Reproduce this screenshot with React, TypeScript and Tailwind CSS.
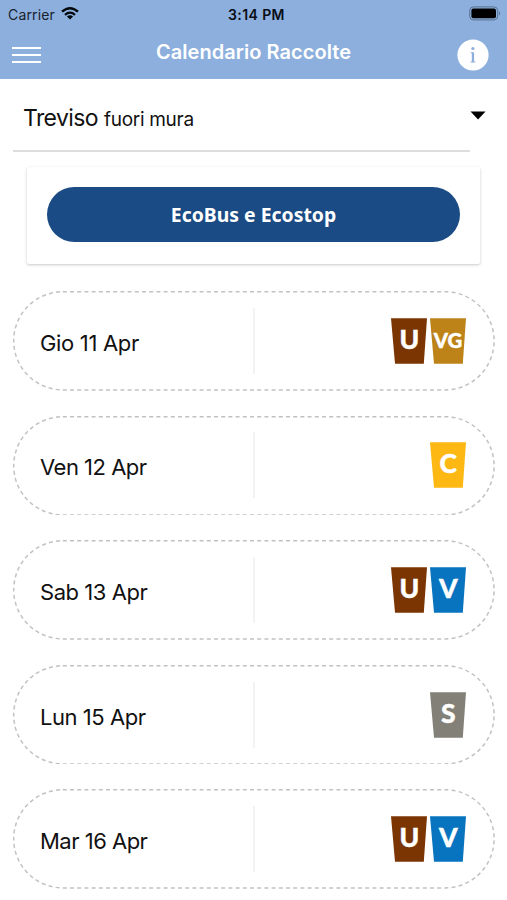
type Bin = "U" | "VG" | "C" | "V" | "S";

const binColors: Record<Bin, string> = {
  U: "#7b3502",
  VG: "#bd8318",
  C: "#fdb813",
  V: "#0873bf",
  S: "#828077",
};

const days: { date: string; bins: Bin[]; tracking: string }[] = [
  { date: "Gio 11 Apr", bins: ["U", "VG"], tracking: "tracking-[-0.32px]" },
  { date: "Ven 12 Apr", bins: ["C"], tracking: "tracking-[-0.5px]" },
  { date: "Sab 13 Apr", bins: ["U", "V"], tracking: "tracking-[-0.45px]" },
  { date: "Lun 15 Apr", bins: ["S"], tracking: "tracking-[-0.45px]" },
  { date: "Mar 16 Apr", bins: ["U", "V"], tracking: "tracking-[-0.5px]" },
];

function BinIcon({ kind }: { kind: Bin }) {
  const small = kind === "VG";
  return (
    <svg width="36" height="46" viewBox="0 0 36 46" className="block">
      <path d="M0 0.3H36L32.8 45.7H4Z" fill={binColors[kind]} />
      <text
        x={small ? 18.1 : 18.3}
        y={small ? 30.4 : 31.4}
        textAnchor="middle"
        textLength={small ? 28.5 : undefined}
        lengthAdjust="spacingAndGlyphs"
        fill="white"
        stroke="white"
        strokeWidth="0.4"
        fontFamily="Lato, sans-serif"
        fontWeight="900"
        fontSize={small ? 20 : 26.5}
      >
        {kind}
      </text>
    </svg>
  );
}

function DayCard({ date, bins, tracking }: { date: string; bins: Bin[]; tracking: string }) {
  return (
    <li className="relative flex h-[99.6px] items-center pr-[29px] pl-[27px]">
      <svg className="absolute inset-0 h-full w-full" fill="none">
        <rect x="0.7" y="0.7" width="480.4" height="98.2" rx="49.1" stroke="#c2c2c2" strokeWidth="1.5" strokeDasharray="4 3.2" />
      </svg>
      <span className={`w-[213px] pt-[4px] text-[22px] leading-7 text-[#111] ${tracking}`}>{date}</span>
      <span className="h-[66px] w-[2px] bg-[#f3f3f3]" />
      <div className="flex flex-1 justify-end gap-[3.4px]">
        {bins.map((bin) => (
          <BinIcon key={bin} kind={bin} />
        ))}
      </div>
    </li>
  );
}

export default function App() {
  return (
    <main className="h-[900px] w-[507px] overflow-hidden bg-white font-['Inter',sans-serif]">
      <header className="h-[79px] bg-[#8dafdd]">
        <div className="flex h-[28px] items-center justify-between pr-[6px] pl-2">
          <div className="flex w-[180px] items-center gap-[6px] text-[14px] text-[#182130]">
            <span className="tracking-[0.15px]">Carrier</span>
            <svg width="18" height="13" viewBox="0 0 18 13" fill="none" stroke="#05080d" strokeWidth="2.3" className="-mt-[2px]">
              <path d="M1 4.7Q9 -2.3 17 4.7M4 7.8Q9 3.5 14 7.8" />
              <path d="M9 12.6L5.9 9.6Q9 7.1 12.1 9.6Z" fill="#05080d" stroke="none" />
            </svg>
          </div>
          <span className="ml-[4px] text-[14px] font-semibold tracking-[0.4px] text-[#080d15]">3:14 PM</span>
          <div className="flex w-[180px] justify-end">
            <svg width="32" height="15" viewBox="0 0 32 15" className="-mt-[2px]">
              <rect x="0.7" y="0.9" width="28" height="13" rx="3.8" fill="none" stroke="#58708f" strokeWidth="1" />
              <rect x="2.4" y="2.6" width="24.6" height="9.6" rx="2" fill="#000" />
              <path d="M30 5.2Q32 7.4 30 9.6Z" fill="#58708f" />
            </svg>
          </div>
        </div>
        <div className="flex h-[51px] items-center justify-between pr-[18px] pl-3">
          <div className="flex w-[60px] flex-col gap-[5px] pt-[3px]">
            <span className="h-[2px] w-[29px] bg-white" />
            <span className="h-[2px] w-[29px] bg-white" />
            <span className="h-[2px] w-[29px] bg-white" />
          </div>
          <h1 className="pb-[3px] text-[20px] font-semibold tracking-[0.05px] text-white">Calendario Raccolte</h1>
          <div className="flex w-[54px] justify-end pt-[3px]">
            <svg width="32" height="32" viewBox="0 0 32 32">
              <circle cx="16" cy="16" r="15.6" fill="white" />
              <circle cx="15.9" cy="9.5" r="1.6" fill="#8dafdd" />
              <path d="M13.6 13.2H17.1V22.5H18.3V23.6H13.6V22.5H14.8V14.3H13.6Z" fill="#8dafdd" />
            </svg>
          </div>
        </div>
      </header>

      <div className="ml-[13px] flex h-[73px] w-[457px] items-center border-b-2 border-[#dddddd] pb-[1px] pl-[10px]">
        <div className="flex w-[447px] shrink-0 items-baseline gap-[6px] pt-[9px] text-[#111]">
          <span className="text-[23px] tracking-[-0.6px]">Treviso</span>
          <span className="text-[19px] tracking-[-0.3px]">fuori mura</span>
        </div>
        <svg width="16" height="9" viewBox="0 0 16 9" className="mt-[2px] shrink-0">
          <path d="M0.5 0.5H15.5L8 8.5Z" fill="#000" />
        </svg>
      </div>

      <section className="mt-[15px] ml-[27px] h-[97px] w-[453px] rounded-[2px] bg-white px-[20px] pt-[20px] shadow-[0_1px_3px_rgba(0,0,0,0.22)]">
        <button className="flex h-[55px] w-full items-center justify-center rounded-full bg-[#1b4b85] pt-[1px] font-['Noto_Sans',sans-serif] text-[19.4px] font-bold text-white">
          EcoBus e Ecostop
        </button>
      </section>

      <ul className="mt-[27px] ml-[13px] flex w-[482px] flex-col gap-[25px]">
        {days.map((day) => (
          <DayCard key={day.date} {...day} />
        ))}
      </ul>
    </main>
  );
}
